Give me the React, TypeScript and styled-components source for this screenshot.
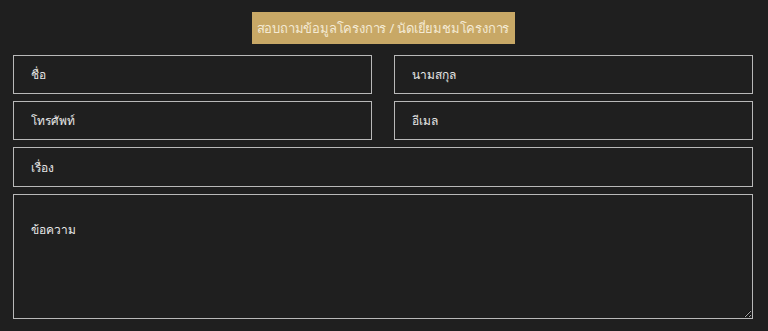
import React from 'react'
import styled, { createGlobalStyle } from 'styled-components'

const GlobalStyle = createGlobalStyle`
  html, body {
    margin: 0;
    padding: 0;
    background: #1f1f1f;
    font-family: 'Noto Sans', 'DejaVu Sans', sans-serif;
  }
`

const Page = styled.div`
  padding: 12px 15px 0 13px;
  height: 331px;
  box-sizing: border-box;
  display: flex;
  flex-direction: column;
  align-items: center;
`

const TabButton = styled.button`
  width: 263px;
  height: 32px;
  padding: 0;
  border: 0;
  background: #c8a866;
  color: #f4ead4;
  font-family: inherit;
  font-size: 13px;
  white-space: nowrap;
  letter-spacing: -0.2px;
  cursor: pointer;
`

const Form = styled.form`
  margin-top: 11px;
  width: 100%;
  display: grid;
  grid-template-columns: 1fr 1fr;
  column-gap: 22px;
  row-gap: 7px;
`

const Field = styled.input<{ $wide?: boolean }>`
  grid-column: ${p => (p.$wide ? '1 / -1' : 'auto')};
  height: ${p => (p.$wide ? 40 : 39)}px;
  box-sizing: border-box;
  background: transparent;
  border: 1px solid #b9b9b9;
  padding: 0 17px;
  color: #eee;
  font-family: inherit;
  font-size: 12px;
  outline: none;

  &::placeholder {
    color: #e6e6e6;
  }
`

const Message = styled.textarea`
  grid-column: 1 / -1;
  height: 125px;
  box-sizing: border-box;
  background: transparent;
  border: 1px solid #b9b9b9;
  padding: 25px 17px;
  color: #eee;
  font-family: inherit;
  font-size: 12px;
  outline: none;
  resize: vertical;

  &::placeholder {
    color: #e6e6e6;
  }
`

export default function App() {
  return (
    <>
      <GlobalStyle />
      <Page>
        <TabButton type="button">สอบถามข้อมูลโครงการ / นัดเยี่ยมชมโครงการ</TabButton>
        <Form>
          <Field placeholder="ชื่อ" />
          <Field placeholder="นามสกุล" />
          <Field placeholder="โทรศัพท์" />
          <Field placeholder="อีเมล" />
          <Field $wide placeholder="เรื่อง" />
          <Message placeholder="ข้อความ" />
        </Form>
      </Page>
    </>
  )
}
